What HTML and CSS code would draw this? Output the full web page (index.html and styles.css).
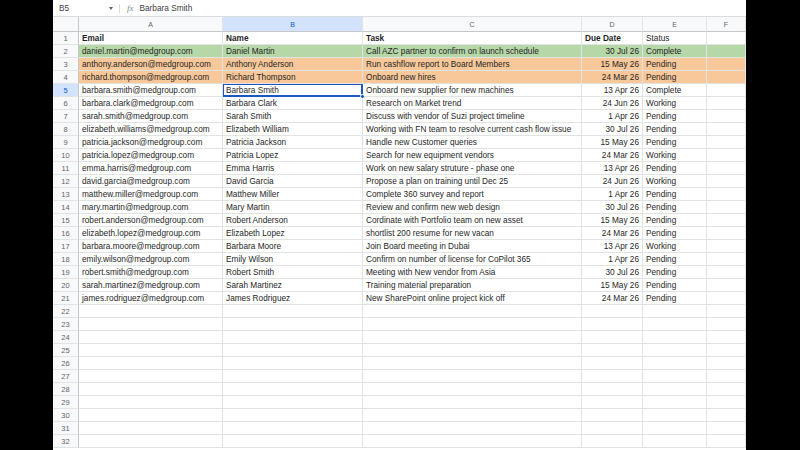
FILE: index.html
```html
<!DOCTYPE html>
<html lang="en">
<head>
    <meta charset="UTF-8">
    <meta name="viewport" content="width=device-width, initial-scale=1.0">
    <title>Tasks - Sheet</title>
    <link rel="stylesheet" href="styles.css">
</head>
<body>
    <div class="window">
        <div class="formula-bar">
            <div class="name-box">B5</div>
            <span class="caret"></span>
            <span class="divider"></span>
            <span class="fx">fx</span>
            <span class="formula">Barbara Smith</span>
        </div>
        <div class="sheet" id="sheet"></div>
    </div>

    <script>
        const columns = ['', 'A', 'B', 'C', 'D', 'E', 'F'];

        const rows = [
            ['Email', 'Name', 'Task', 'Due Date', 'Status'],
            ['daniel.martin@medgroup.com', 'Daniel Martin', 'Call AZC partner to confirm on launch schedule', '30 Jul 26', 'Complete'],
            ['anthony.anderson@medgroup.com', 'Anthony Anderson', 'Run cashflow report to Board Members', '15 May 26', 'Pending'],
            ['richard.thompson@medgroup.com', 'Richard Thompson', 'Onboard new hires', '24 Mar 26', 'Pending'],
            ['barbara.smith@medgroup.com', 'Barbara Smith', 'Onboard new supplier for new machines', '13 Apr 26', 'Complete'],
            ['barbara.clark@medgroup.com', 'Barbara Clark', 'Research on Market trend', '24 Jun 26', 'Working'],
            ['sarah.smith@medgroup.com', 'Sarah Smith', 'Discuss with vendor of Suzi project timeline', '1 Apr 26', 'Pending'],
            ['elizabeth.williams@medgroup.com', 'Elizabeth William', 'Working with FN team to resolve current cash flow issue', '30 Jul 26', 'Pending'],
            ['patricia.jackson@medgroup.com', 'Patricia Jackson', 'Handle new Customer queries', '15 May 26', 'Pending'],
            ['patricia.lopez@medgroup.com', 'Patricia Lopez', 'Search for new equipment vendors', '24 Mar 26', 'Working'],
            ['emma.harris@medgroup.com', 'Emma Harris', 'Work on new salary struture - phase one', '13 Apr 26', 'Pending'],
            ['david.garcia@medgroup.com', 'David Garcia', 'Propose a plan on training until Dec 25', '24 Jun 26', 'Working'],
            ['matthew.miller@medgroup.com', 'Matthew Miller', 'Complete 360 survey and report', '1 Apr 26', 'Pending'],
            ['mary.martin@medgroup.com', 'Mary Martin', 'Review and confirm new web design', '30 Jul 26', 'Pending'],
            ['robert.anderson@medgroup.com', 'Robert Anderson', 'Cordinate with Portfolio team on new asset', '15 May 26', 'Pending'],
            ['elizabeth.lopez@medgroup.com', 'Elizabeth Lopez', 'shortlist 200 resume for new vacan', '24 Mar 26', 'Pending'],
            ['barbara.moore@medgroup.com', 'Barbara Moore', 'Join Board meeting in Dubai', '13 Apr 26', 'Working'],
            ['emily.wilson@medgroup.com', 'Emily Wilson', 'Confirm on number of license for CoPilot 365', '1 Apr 26', 'Pending'],
            ['robert.smith@medgroup.com', 'Robert Smith', 'Meeting with New vendor from Asia', '30 Jul 26', 'Pending'],
            ['sarah.martinez@medgroup.com', 'Sarah Martinez', 'Training material preparation', '15 May 26', 'Pending'],
            ['james.rodriguez@medgroup.com', 'James Rodriguez', 'New SharePoint online project kick off', '24 Mar 26', 'Pending']
        ];

        // row colours from the conditional formatting
        const rowClass = { 2: 'row-green', 3: 'row-orange', 4: 'row-orange' };

        function cell(text, className) {
            const div = document.createElement('div');
            div.className = className;
            div.textContent = text;
            return div;
        }

        const sheet = document.getElementById('sheet');

        columns.forEach(function (letter) {
            let cls = 'col-head';
            if (letter === '') cls += ' corner';
            if (letter === 'B') cls += ' active';
            sheet.appendChild(cell(letter, cls));
        });

        for (let r = 1; r <= 32; r++) {
            const data = rows[r - 1] || [];
            sheet.appendChild(cell(r, r === 5 ? 'row-head active' : 'row-head'));
            for (let c = 0; c < 6; c++) {
                let cls = 'cell';
                if (rowClass[r]) cls += ' ' + rowClass[r];
                if (r === 1 && c < 4) cls += ' bold';
                if (c === 3 && r > 1) cls += ' num';
                if (r === 5 && c === 1) cls += ' selected';
                const div = cell(data[c] || '', cls);
                if (r === 5 && c === 1) {
                    const handle = document.createElement('span');
                    handle.className = 'handle';
                    div.appendChild(handle);
                }
                sheet.appendChild(div);
            }
        }
    </script>
</body>
</html>
```

FILE: styles.css
```css
/* Page frame */
body {
    margin: 0;
    background: #000;
    font-family: "Liberation Sans", Arial, sans-serif;
    overflow: hidden;
}

.window {
    width: 693px;
    height: 450px;
    margin-left: 53px;
    background: #fff;
    overflow: hidden;
}

/* Formula bar */
.formula-bar {
    height: 16px;
    display: flex;
    align-items: center;
    border-bottom: 1px solid #dadce0;
    font-size: 8.25px;
    color: #3c4043;
}

.name-box {
    width: 50px;
    padding-left: 6px;
}

.caret {
    width: 0;
    height: 0;
    border-left: 2.5px solid transparent;
    border-right: 2.5px solid transparent;
    border-top: 3px solid #5f6368;
}

.divider {
    width: 1px;
    height: 9px;
    background: #dadce0;
    margin: 0 7px 0 6px;
}

.fx {
    font-family: "Liberation Serif", serif;
    font-style: italic;
    font-size: 9px;
    color: #80868b;
    margin-right: 6px;
}

/* Grid */
.sheet {
    display: grid;
    grid-template-columns: 26px 144px 140px 219px 61px 64px 39px;
    grid-template-rows: 15px;
    grid-auto-rows: 13px;
    font-size: 8.25px;
}

.sheet > div {
    box-sizing: border-box;
    border-right: 1px solid #e2e3e3;
    border-bottom: 1px solid #e2e3e3;
    white-space: nowrap;
    overflow: hidden;
}

.col-head {
    background: #f8f9fa;
    color: #5f6368;
    font-size: 7px;
    text-align: center;
    padding-top: 1px;
    line-height: 13px;
    border-bottom-color: #c7c7c7 !important;
}

.row-head {
    background: #f8f9fa;
    color: #5f6368;
    font-size: 7.5px;
    text-align: center;
    padding-top: 1px;
    line-height: 11px;
    border-right-color: #c7c7c7 !important;
}

.corner {
    border-right-color: #c7c7c7 !important;
}

.col-head.active,
.row-head.active {
    background: #d3e3fd;
    color: #0b57d0;
}

.cell {
    color: #1f1f1f;
    padding: 1px 0 0 3px;
    line-height: 11px;
}

.cell.bold {
    font-weight: bold;
}

.cell.num {
    text-align: right;
    padding: 1px 3px 0 0;
}

.row-green {
    background: #b6d7a8;
}

.row-orange {
    background: #f9c89a;
}

/* Active cell */
.cell.selected {
    position: relative;
    overflow: visible !important;
    box-shadow: inset 0 0 0 1px #1a57c4;
    border-color: #1a57c4 !important;
    z-index: 1;
}

.handle {
    position: absolute;
    right: -3px;
    bottom: -3px;
    width: 5px;
    height: 5px;
    border-radius: 50%;
    background: #1a57c4;
    border: 1px solid #fff;
    box-sizing: border-box;
}
```
